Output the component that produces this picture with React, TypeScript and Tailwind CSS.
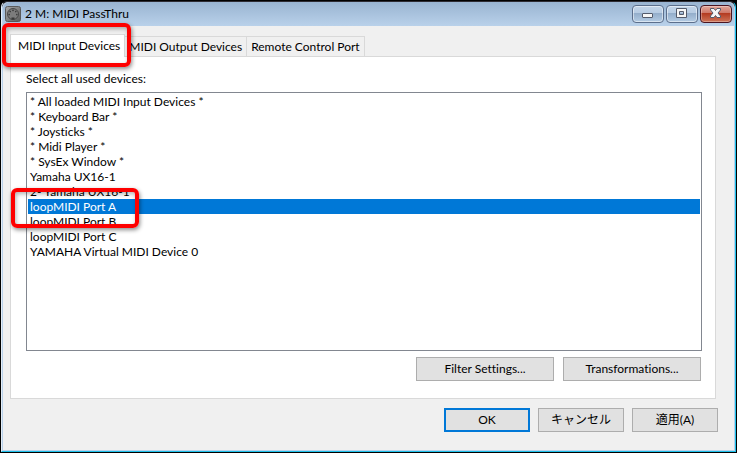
import React, { useState } from "react";

const tabs = ["MIDI Input Devices", "MIDI Output Devices", "Remote Control Port"];

const devices = [
  "* All loaded MIDI Input Devices *",
  "* Keyboard Bar *",
  "* Joysticks *",
  "* Midi Player *",
  "* SysEx Window *",
  "Yamaha UX16-1",
  "2- Yamaha UX16-1",
  "loopMIDI Port A",
  "loopMIDI Port B",
  "loopMIDI Port C",
  "YAMAHA Virtual MIDI Device 0",
];

const DinIcon = () => (
  <svg width="16" height="16" viewBox="0 0 16 16" aria-hidden="true">
    <defs>
      <linearGradient id="plate" x1="0" y1="0" x2="1" y2="1">
        <stop offset="0" stopColor="#a8a8a8" />
        <stop offset="1" stopColor="#5c5c5c" />
      </linearGradient>
    </defs>
    <rect x="0.5" y="0.5" width="15" height="15" rx="2" fill="url(#plate)" stroke="#5a5a5a" />
    <circle cx="8" cy="8" r="5.5" fill="#7c7c7c" stroke="#484848" />
    <g fill="#383838">
      <circle cx="4.2" cy="8.6" r="0.8" />
      <circle cx="5.2" cy="5.6" r="0.8" />
      <circle cx="8" cy="4.4" r="0.8" />
      <circle cx="10.8" cy="5.6" r="0.8" />
      <circle cx="11.8" cy="8.6" r="0.8" />
    </g>
    <path d="M6.500 13.500v-2h3v2z" fill="#383838" />
  </svg>
);

const Highlight = ({ className }: { className: string }) => (
  <div
    className={`absolute pointer-events-none rounded-md border-4 border-[#fe0000] shadow-[1px_2px_4px_rgba(0,0,0,0.45),inset_1px_2px_4px_rgba(0,0,0,0.3)] ${className}`}
  />
);

const captionButton =
  "flex h-[18px] w-8 items-center justify-center rounded-sm border border-[#5c6f8c] bg-[linear-gradient(#c3d5e9,#b6cbe2_45%,#93adca_45%,#b4cce4)] shadow-[inset_0_0_0_1px_rgba(255,255,255,0.5)]";

const closeButton =
  "flex h-[18px] w-8 items-center justify-center rounded-sm border border-[#4b1420] bg-[linear-gradient(#e3a79b,#cd7565_45%,#b3391f_45%,#cd7458)] shadow-[inset_0_0_0_1px_rgba(255,255,255,0.3)]";

const pushButton = "h-6 border border-[#adadad] bg-[#e1e1e1]";

const App = () => {
  const [tab, setTab] = useState(0);
  const [selected, setSelected] = useState("loopMIDI Port A");

  return (
    <div className="min-h-screen flex flex-col bg-black p-px text-xs text-black font-[Lato,'Noto_Sans_CJK_JP',sans-serif] [font-variant-ligatures:none]">
      <div className="flex-1 flex flex-col rounded-t-md border border-t-[#2e2c33] border-l-[#e4eef8] border-r-[#1cc0ea] border-b-[#1cc0ea]">
        <div className="flex-1 flex flex-col rounded-t-md border border-t-0 border-[#b9d1ea] bg-[#f0f0f0]">
          <header className="flex h-6 items-center gap-1 rounded-t-md bg-linear-to-b from-[#99b4d1] to-[#b9d1ea] px-0.5">
            <DinIcon />
            <h1 className="flex-1">2 M: MIDI PassThru</h1>
            <div className="flex gap-0.5">
              <button aria-label="Minimize" className={captionButton}>
                <svg width="12" height="12" viewBox="0 0 12 12">
                  <rect x="0.5" y="5.5" width="10" height="4" rx="0.5" fill="#f6f6f6" stroke="#545b6b" />
                </svg>
              </button>
              <button aria-label="Maximize" className={captionButton}>
                <svg width="12" height="12" viewBox="0 0 12 12">
                  <path fillRule="evenodd" d="M0.500 0.500h10v9h-10zM3.500 3.500v3h4v-3z" fill="#f6f6f6" stroke="#545b6b" />
                </svg>
              </button>
              <button aria-label="Close" className={closeButton}>
                <svg width="12" height="12" viewBox="0 0 12 12">
                  <path
                    d="M0.500 0.500h3.500l1.500 2L7 0.500h3.500v1.500L8 5l2.500 3v1.500H7l-1.500-2-1.500 2H0.500V8L3 5 0.500 2z"
                    fill="#f6f6f6"
                    stroke="#545b6b"
                  />
                </svg>
              </button>
            </div>
          </header>

          <main className="flex-1 flex flex-col pl-[7px] pr-4 pt-2 pb-[18px]">
            <div role="tablist" className="flex items-end">
              {tabs.map((name, i) => (
                <div key={name} className="relative">
                  <button
                    role="tab"
                    aria-selected={tab === i}
                    onClick={() => setTab(i)}
                    className={
                      tab === i
                        ? "relative -mb-px block h-[23px] border border-b-0 border-[#d9d9d9] bg-white pl-[7px] pr-1"
                        : "block h-5 border border-b-0 border-l-0 border-[#d9d9d9] px-1"
                    }
                  >
                    {name}
                  </button>
                  {i === 0 && <Highlight className="z-10 -left-2 -right-1.5 -top-[11px] -bottom-[11px]" />}
                </div>
              ))}
            </div>

            <section className="mr-0.5 flex-1 flex flex-col border border-[#d9d9d9] bg-white pl-[15px] pr-[13px] pt-[14px] pb-[17px]">
              <label htmlFor="devices" className="mb-[5px]">Select all used devices:</label>
              <div className="relative flex-1 flex">
                <select
                  id="devices"
                  size={17}
                  value={selected}
                  onChange={(e) => setSelected(e.target.value)}
                  className="flex-1 appearance-none overflow-hidden border border-[#828790] bg-white p-px outline-none"
                >
                  {devices.map((name) => (
                    <option
                      key={name}
                      className="h-[15px] min-h-0 px-0.5 py-0 leading-[15px] checked:bg-linear-to-b checked:from-[#0078d7] checked:to-[#0078d7] checked:[-webkit-text-fill-color:white]"
                    >
                      {name}
                    </option>
                  ))}
                </select>
                <Highlight className="-left-[15px] top-24 h-10 w-32" />
              </div>
              <div className="mt-1.5 flex justify-end gap-[9px] pr-px">
                <button className={`${pushButton} w-[138px]`}>Filter Settings...</button>
                <button className={`${pushButton} w-[138px]`}>Transformations...</button>
              </div>
            </section>

            <footer className="mt-[9px] flex justify-end gap-2">
              <button className="h-6 w-[86px] border-2 border-[#0078d7] bg-[#e1e1e1]">OK</button>
              <button className={`${pushButton} w-[86px]`}>キャンセル</button>
              <button className={`${pushButton} w-[86px]`}>適用(A)</button>
            </footer>
          </main>
        </div>
      </div>
    </div>
  );
};

export default App;
